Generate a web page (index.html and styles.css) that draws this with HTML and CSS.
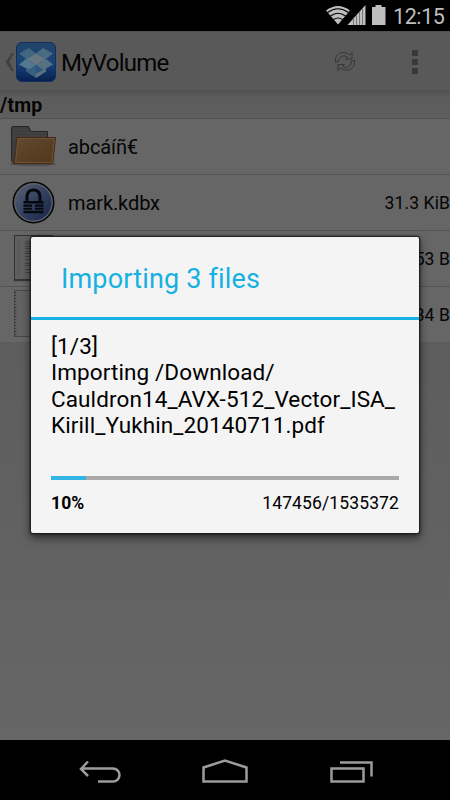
FILE: index.html
```html
<!DOCTYPE html>
<html lang="en">
<head>
<meta charset="utf-8">
<title>MyVolume</title>
<link rel="stylesheet" href="styles.css">
</head>
<body>
<div class="screen">
  <header class="status">
    <svg class="status-icons" width="62" height="31" viewBox="0 0 62 31">
      <path d="M1 10.500Q13 1.500 25 10.500L13 24.500Z" fill="#bebebe"/>
      <path d="M2.500 12.500Q13 5 23.500 12.500M5.500 16Q13 10.500 20.500 16M8.500 19.500Q13 16.500 17.500 19.500" fill="none" stroke="#000" stroke-width="1.200"/>
      <path d="M22.500 25L40.500 5V25Z" fill="#bebebe"/>
      <path d="M28.500 19V25M31.500 15V25M34.500 12V25M37.500 9V25" stroke="#777" stroke-width="1"/>
      <path d="M47 7h3.500V5h6v2H60.500v18H47Z" fill="#bebebe"/>
    </svg>
    <span class="clock">12:15</span>
  </header>
  <div class="actionbar">
    <svg class="up" width="10" height="20" viewBox="0 0 10 20"><path d="M6.500 1H9L4.500 10L9 19H6.500L.500 10Z" fill="#414141"/></svg>
    <svg class="applogo" width="40" height="40" viewBox="0 0 40 40">
      <defs><linearGradient id="lg" x1="0" y1="0" x2="0" y2="1"><stop offset="0" stop-color="#234567"/><stop offset=".55" stop-color="#17437a"/><stop offset="1" stop-color="#071f50"/></linearGradient></defs>
      <rect x=".5" y=".5" width="39" height="39" rx="5.500" fill="url(#lg)" stroke="#102f5c"/>
      <path d="M13 6L20 11.500L10 17L3 11.500Z" fill="#426581"/>
      <path d="M27 6L37 11.500L30 17L20 11.500Z" fill="#4b6b82"/>
      <path d="M10 17L20 11.500L30 17L20 23Z" fill="#667783"/>
      <path d="M10 17L20 23L13 28L3 22.500Z" fill="#557891"/>
      <path d="M30 17L37 22.500L27 28L20 23Z" fill="#587284"/>
      <path d="M10 26L13 28L20 23V36L10 29.500Z" fill="#385f7e"/>
      <path d="M20 23L27 28L30 26V29.500L20 36Z" fill="#61737e"/>
      <path d="M20 23L27 28L20 32Z" fill="#285782"/>
    </svg>
    <h1 class="app-title">MyVolume</h1>
    <svg class="refresh" width="22" height="24" viewBox="0 0 22 24" fill="none" stroke="#363636" stroke-width="1">
      <path d="M1.500 12C1 6 4 2.500 9 2.500C12 2.500 14 3.500 15.500 5L18 2.500V9H11.500L13.500 7C9 4.500 5 6.500 4.500 11.500Z"/>
      <path d="M20.500 10.500C21 17 17.500 20 13 20C10 20 8 19 6.500 18L4 21V14.500H10.500L8.500 16.500C13 19 17.500 16 17.500 11Z"/>
    </svg>
    <div class="overflow"><i></i><i></i><i></i></div>
  </div>
  <div class="path"><span>/tmp</span></div>
  <ul class="files">
    <li>
      <svg class="icon" width="68" height="55" viewBox="0 0 68 55">
        <defs><linearGradient id="fg" x1="0" y1="0" x2="1" y2="1"><stop offset="0" stop-color="#614b30"/><stop offset="1" stop-color="#51361a"/></linearGradient></defs>
        <ellipse cx="33" cy="45" rx="23" ry="2" fill="#4d4d4d"/>
        <path d="M11.500 8.500Q11.500 7.500 12.500 7.500H28.500L31 12.500H47.500V44H13.500L11.500 42Z" fill="#3c3c3c" stroke="#262626"/>
        <path d="M13 11H28M13 14H46M13 17H46M13 20H46" stroke="#494949"/>
        <path d="M17 18.500H55.500L53 43Q53 44.500 51 44.500H14.500Z" fill="url(#fg)" stroke="#482711"/>
        <path d="M18 19.500H54.300L52 43.500H15.500Z" fill="none" stroke="#715b43" stroke-width=".8"/>
      </svg>
      <span class="name">abcáíñ€</span>
    </li>
    <li>
      <svg class="icon" width="68" height="55" viewBox="0 0 68 55">
        <defs><linearGradient id="kg" x1="0" y1="0" x2="1" y2="1"><stop offset="0" stop-color="#5a6170"/><stop offset=".5" stop-color="#33405e"/><stop offset="1" stop-color="#172346"/></linearGradient></defs>
        <circle cx="33.500" cy="27.500" r="20.200" fill="#5c6068" stroke="#050709" stroke-width="1.600"/>
        <circle cx="33.500" cy="27.500" r="18" fill="url(#kg)"/>
        <path d="M27 26V21.500Q27.500 15 33.500 15T40 21.500V26" fill="none" stroke="#05080e" stroke-width="3"/>
        <path d="M23.500 26h20v2.500h-20zM23.500 29.500h8.500v2.300h-8.500zM35 29.500h8.500v2.300H35zM23.500 32.800h8.500v2h-8.500zM35 32.800h8.500v2H35zM23.500 35.800h20v2.500h-20z" fill="#05080e"/>
      </svg>
      <span class="name">mark.kdbx</span><span class="size">31.3 KiB</span>
    </li>
    <li>
      <svg class="icon" width="68" height="55" viewBox="0 0 68 55">
        <rect x="14.500" y="4.500" width="38" height="44" fill="#606060" stroke="#303030"/>
        <path d="M13.500 49.500H53" stroke="#383838" stroke-width="1.500"/>
        <path d="M18.500 8V44" stroke="#585858" stroke-width="2"/>
        <path d="M25 10.500H48M25 12.500H48M25 15.500H48M25 17.500H48M25 20.500H48M25 22.500H48M25 25.500H48M25 28.500H48M25 32.500H48M25 34.500H48M25 38.500H48M25 41.500H48" stroke="#444"/>
      </svg>
      <span class="size">53 B</span>
    </li>
    <li>
      <svg class="icon" width="68" height="55" viewBox="0 0 68 55">
        <rect x="14.500" y="3.500" width="38" height="46" fill="#626262" stroke="#484848"/>
        <path d="M15.500 5V49" stroke="#333" stroke-width="1.500" stroke-dasharray="1 2"/>
      </svg>
      <span class="size">34 B</span>
    </li>
  </ul>
  <main class="rest"></main>
  <nav class="nav">
    <svg width="450" height="60" viewBox="0 0 450 60" fill="none" stroke="#9c9c9c" stroke-width="2.500">
      <path d="M88 21.500L81 29L88 36M81 28.500H113A6.500 6.500 0 0 1 113 41.500H98"/>
      <path d="M203.500 41.500V27.500L225 20.500L246.500 27.500V41.500Z"/>
      <path d="M331.500 28.500H363.500V41.500H331.500ZM340 22.500H371.500V36.500"/>
    </svg>
  </nav>
  <section class="dialog" role="dialog">
    <h2>Importing 3 files</h2>
    <div class="content">
      <p class="message">[1/3]<br>Importing /Download/<br>Cauldron14_AVX-512_Vector_ISA_<br>Kirill_Yukhin_20140711.pdf</p>
      <div class="track"><div class="fill" style="width:10%"></div></div>
      <div class="progress-text"><b>10%</b><span>147456/1535372</span></div>
    </div>
  </section>
</div>
</body>
</html>
```
FILE: styles.css
```css
* { box-sizing: border-box; }
body { margin: 0; font-family: Roboto, "Liberation Sans", sans-serif; color: #050505; }
h1, h2, p, ul { margin: 0; padding: 0; font-weight: 400; }
svg { display: block; flex: none; }
.screen { position: relative; width: 450px; height: 800px; overflow: hidden; display: flex; flex-direction: column; background: #000; }
.status { height: 31px; flex: none; display: flex; justify-content: flex-end; padding-right: 7px; color: #bebebe; }
.status-icons { margin-right: 6px; }
.clock { width: 50px; font-size: 21.500px; line-height: 33px; white-space: nowrap; letter-spacing: -.4px; }
.actionbar { height: 59px; flex: none; display: flex; align-items: center; padding: 1px 0 0 5px; background: #595959; border-top: 1px solid #515151; }
.applogo { margin-left: 1px; }
.app-title { margin-left: 5px; padding-top: 2px; width: 273px; font-size: 24px; line-height: 30px; letter-spacing: -.75px; }
.overflow { display: flex; flex-direction: column; gap: 3px; margin-left: 56px; }
.overflow i { width: 6px; height: 6px; background: #393939; }
.path { height: 29px; flex: none; padding-top: 4px; background: linear-gradient(#515151, #5c5c5c 7px, #5e5e5e); border-bottom: 1px solid #525252; font-size: 19.500px; line-height: 24px; font-weight: 700; letter-spacing: .15px; }
.files { list-style: none; flex: none; background: #666; }
.files li { height: 56px; display: flex; align-items: center; border-bottom: 1px solid #535353; }
.files li:last-child { border-bottom: 0; height: 55px; }
.name { font-size: 20px; line-height: 24px; letter-spacing: -.1px; }
.size { margin-left: auto; font-size: 17.500px; letter-spacing: .1px; }
.rest { flex: 1; background: linear-gradient(#5d5d5d, #666); }
.nav { height: 60px; flex: none; }
.dialog { position: absolute; left: 31px; top: 237px; width: 388px; height: 296px; border-radius: 2px; background: #f4f4f4; box-shadow: 0 0 2px 1px #151515, 0 4px 9px 1px rgba(0,0,0,.55); color: #000; }
.dialog h2 { height: 83px; padding: 25px 30px 0; border-bottom: 3px solid #16b1e2; color: #16b1e2; font-size: 27px; line-height: 34px; letter-spacing: .17px; }
.content { padding: 12px 20px 0; }
.message { height: 144px; padding-top: 1px; font-size: 22.500px; line-height: 26.400px; letter-spacing: .1px; white-space: nowrap; }
.track { height: 4px; background: #a9a9a9; }
.fill { height: 4px; background: #33b5e5; }
.progress-text { display: flex; justify-content: space-between; margin-top: 12px; font-size: 17.500px; line-height: 22px; letter-spacing: .12px; }
```
